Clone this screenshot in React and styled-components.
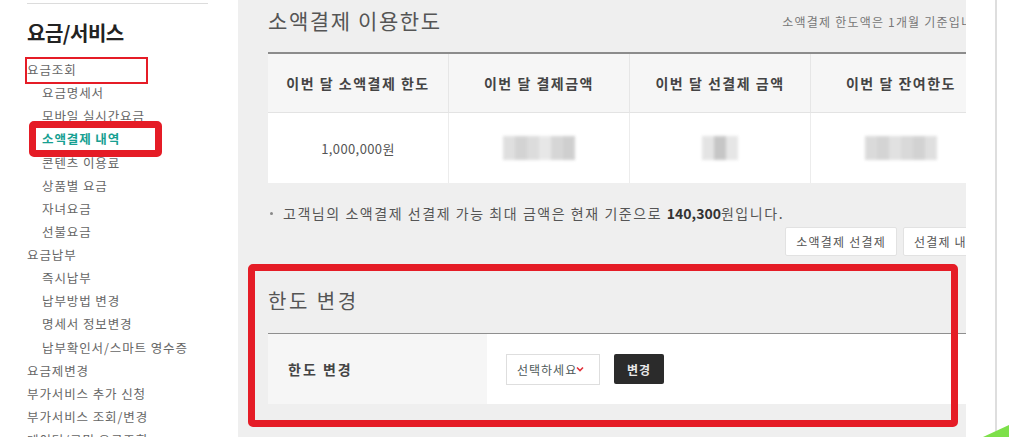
import React from "react";
import styled, { createGlobalStyle } from "styled-components";

const GlobalStyle = createGlobalStyle`
  html, body { margin: 0; padding: 0; background: #fff; overflow: hidden; }
  body { font-family: "Noto Sans CJK KR", "Noto Sans", sans-serif; }
  * { box-sizing: border-box; }
`;

const Page = styled.div`
  position: relative;
  display: flex;
  width: 1009px;
  height: 437px;
  overflow: hidden;
  background: #fff;
`;

const Sidebar = styled.aside`
  width: 238px;
  flex-shrink: 0;
  padding-left: 27px;
`;

const TopRule = styled.div`
  width: 181px;
  height: 1px;
  margin-top: 3px;
  background: #dcdcdc;
`;

const SideTitle = styled.h2`
  margin: 17px 0 0;
  font-size: 20px;
  line-height: 24px;
  font-weight: 700;
  color: #222;
  letter-spacing: -0.5px;
`;

const MenuList = styled.ul`
  list-style: none;
  margin: 13px 0 0;
  padding: 0;
`;

const MenuItem = styled.li`
  font-size: 12.5px;
  line-height: 23.13px;
  height: 23.13px;
  letter-spacing: 0.9px;
  white-space: nowrap;
  padding-left: ${(p) => (p.$sub ? "15px" : "0")};
  color: ${(p) => (p.$active ? "#17a092" : "#666")};
  font-weight: ${(p) => (p.$active ? 700 : 400)};
`;

const Main = styled.main`
  width: 728px;
  flex-shrink: 0;
  background: #efefef;
  overflow: hidden;
  padding-left: 30px;
`;

const Inner = styled.div`
  width: 760px;
`;

const TitleRow = styled.div`
  display: flex;
  align-items: flex-start;
  height: 52px;
`;

const PageTitle = styled.h1`
  margin: 5px 0 0;
  font-size: 21px;
  line-height: 30px;
  font-weight: 400;
  color: #555;
  letter-spacing: 1.6px;
`;

const Note = styled.span`
  margin: 14px 38px 0 auto;
  font-size: 12px;
  line-height: 16px;
  letter-spacing: 1.2px;
  color: #777;
  white-space: nowrap;
`;

const Table = styled.div`
  display: grid;
  grid-template-columns: 180px repeat(4, 181px);
  border-top: 2px solid #8c8c8c;
`;

const HeadCell = styled.div`
  height: 59px;
  display: flex;
  align-items: center;
  justify-content: center;
  background: #f6f6f6;
  border-left: ${(p) => (p.$first ? "none" : "1px solid #e6e6e6")};
  border-bottom: 1px solid #e3e3e3;
  font-size: 14px;
  font-weight: 700;
  letter-spacing: 1.5px;
  color: #444;
  white-space: nowrap;
`;

const BodyCell = styled.div`
  height: 70px;
  display: flex;
  align-items: center;
  justify-content: center;
  background: #fff;
  border-left: ${(p) => (p.$first ? "none" : "1px solid #ececec")};
  font-size: 13px;
  letter-spacing: 0.4px;
  color: #555;
  white-space: nowrap;
`;

const Blur = styled.span`
  display: flex;
  filter: blur(1.6px);
  opacity: 0.8;
`;

const Pix = styled.span`
  display: block;
  width: 12px;
  height: 24px;
  background: ${(p) => p.$c};
`;

const Bullet = styled.p`
  margin: 20px 0 0;
  display: flex;
  align-items: center;
  font-size: 14px;
  line-height: 20px;
  letter-spacing: 1.55px;
  color: #555;
  white-space: nowrap;
  &::before {
    content: "";
    width: 3px;
    height: 3px;
    border-radius: 50%;
    background: #888;
    margin: 0 10px 0 2px;
  }
  b { color: #333; font-weight: 700; letter-spacing: 0; }
`;

const ButtonRow = styled.div`
  display: flex;
  justify-content: flex-end;
  gap: 6px;
  margin-top: 4px;
  padding-right: 38px;
`;

const GhostButton = styled.button`
  height: 29px;
  padding: 0 10px;
  background: #fff;
  border: 1px solid #e2e2e2;
  border-radius: 2px;
  font-family: inherit;
  font-size: 12px;
  letter-spacing: 1.2px;
  color: #555;
  white-space: nowrap;
`;

const SectionTitle = styled.h3`
  margin: 31px 0 0;
  font-size: 20px;
  line-height: 28px;
  font-weight: 400;
  color: #555;
  letter-spacing: 2.5px;
`;

const FormRow = styled.div`
  display: flex;
  margin-top: 18px;
  border-top: 1px solid #8f8f8f;
  height: 71px;
`;

const FormLabel = styled.div`
  width: 219px;
  display: flex;
  align-items: center;
  padding-left: 20px;
  background: #f6f6f6;
  font-size: 14px;
  font-weight: 700;
  letter-spacing: 2px;
  color: #444;
`;

const FormValue = styled.div`
  flex: 1;
  display: flex;
  align-items: center;
  gap: 14px;
  padding-left: 19px;
  background: #fff;
`;

const SelectBox = styled.div`
  width: 94px;
  height: 31px;
  display: flex;
  align-items: center;
  padding-left: 10px;
  border: 1px solid #dedede;
  background: #fff;
  font-size: 12px;
  letter-spacing: 1px;
  color: #4e5a5a;
  white-space: nowrap;
  svg { margin-left: -1px; flex-shrink: 0; }
`;

const DarkButton = styled.button`
  width: 50px;
  height: 30px;
  padding: 0;
  border: none;
  border-radius: 2px;
  background: #2b2b2b;
  color: #e8e8e8;
  font-family: inherit;
  font-size: 12px;
  font-weight: 700;
  letter-spacing: 1px;
`;

const RightGutter = styled.div`
  flex: 1;
  display: flex;
`;

const GutterSpace = styled.div`
  width: 31px;
  border-right: 2px solid #dedede;
`;

const Mark = styled.div`
  position: absolute;
  left: ${(p) => p.$x}px;
  top: ${(p) => p.$y}px;
  width: ${(p) => p.$w}px;
  height: ${(p) => p.$h}px;
  border: ${(p) => p.$t}px solid #e51c26;
  border-radius: ${(p) => p.$r}px;
  pointer-events: none;
`;

const Corner = styled.svg`
  position: absolute;
  right: 0;
  bottom: 0;
`;

const menu = [
  { t: "요금조회" },
  { t: "요금명세서", sub: true },
  { t: "모바일 실시간요금", sub: true },
  { t: "소액결제 내역", sub: true, active: true },
  { t: "콘텐츠 이용료", sub: true },
  { t: "상품별 요금", sub: true },
  { t: "자녀요금", sub: true },
  { t: "선불요금", sub: true },
  { t: "요금납부" },
  { t: "즉시납부", sub: true },
  { t: "납부방법 변경", sub: true },
  { t: "명세서 정보변경", sub: true },
  { t: "납부확인서/스마트 영수증", sub: true },
  { t: "요금제변경" },
  { t: "부가서비스 추가 신청" },
  { t: "부가서비스 조회/변경" },
  { t: "데이터/로밍 요금조회" },
];

const heads = ["이번 달 소액결제 한도", "이번 달 결제금액", "이번 달 선결제 금액", "이번 달 잔여한도", "이번 달 결제가능"];

const blurSets = [
  null,
  ["#d8d8d8", "#c9c9c9", "#d4d4d4", "#e2e2e2", "#cdcdcd", "#c4c4c4"],
  ["#dedede", "#b9b9b9", "#e0e0e0"],
  ["#d2d2d2", "#cacaca", "#dadada", "#d0d0d0", "#c8c8c8", "#d8d8d8"],
  ["#dcdcdc", "#cfcfcf", "#d6d6d6"],
];

export default function App() {
  return (
    <>
      <GlobalStyle />
      <Page>
        <Sidebar>
          <TopRule />
          <SideTitle>요금/서비스</SideTitle>
          <MenuList>
            {menu.map((m) => (
              <MenuItem key={m.t} $sub={m.sub} $active={m.active}>
                {m.t}
              </MenuItem>
            ))}
          </MenuList>
        </Sidebar>

        <Main>
          <Inner>
            <TitleRow>
              <PageTitle>소액결제 이용한도</PageTitle>
              <Note>소액결제 한도액은 1개월 기준입니다.</Note>
            </TitleRow>
            <Table>
              {heads.map((h, i) => (
                <HeadCell key={h} $first={i === 0}>{h}</HeadCell>
              ))}
              {blurSets.map((set, i) => (
                <BodyCell key={i} $first={i === 0}>
                  {set ? (
                    <Blur>
                      {set.map((c, j) => (
                        <Pix key={j} $c={c} />
                      ))}
                    </Blur>
                  ) : (
                    "1,000,000원"
                  )}
                </BodyCell>
              ))}
            </Table>
            <Bullet>
              고객님의 소액결제 선결제 가능 최대 금액은 현재 기준으로&nbsp;<b>140,300</b>원입니다.
            </Bullet>
            <ButtonRow>
              <GhostButton>소액결제 선결제</GhostButton>
              <GhostButton>선결제 내역</GhostButton>
            </ButtonRow>
            <SectionTitle>한도 변경</SectionTitle>
            <FormRow>
              <FormLabel>한도 변경</FormLabel>
              <FormValue>
                <SelectBox>
                  선택하세요
                  <svg width="8" height="6" viewBox="0 0 8 6">
                    <path d="M1 1.5 L4 4.5 L7 1.5" fill="none" stroke="#e0303a" strokeWidth="1.6" />
                  </svg>
                </SelectBox>
                <DarkButton>변경</DarkButton>
              </FormValue>
            </FormRow>
          </Inner>
        </Main>

        <RightGutter>
          <GutterSpace />
        </RightGutter>

        <Mark $x={25} $y={57} $w={123} $h={27} $t={2} $r={0} />
        <Mark $x={29} $y={121} $w={133} $h={36} $t={7} $r={5} />
        <Mark $x={248} $y={264} $w={710} $h={163} $t={7} $r={5} />
        <Corner width="26" height="14" viewBox="0 0 26 14">
          <path d="M0 14 L26 2 L26 14 Z" fill="#7de04a" />
        </Corner>
      </Page>
    </>
  );
}
